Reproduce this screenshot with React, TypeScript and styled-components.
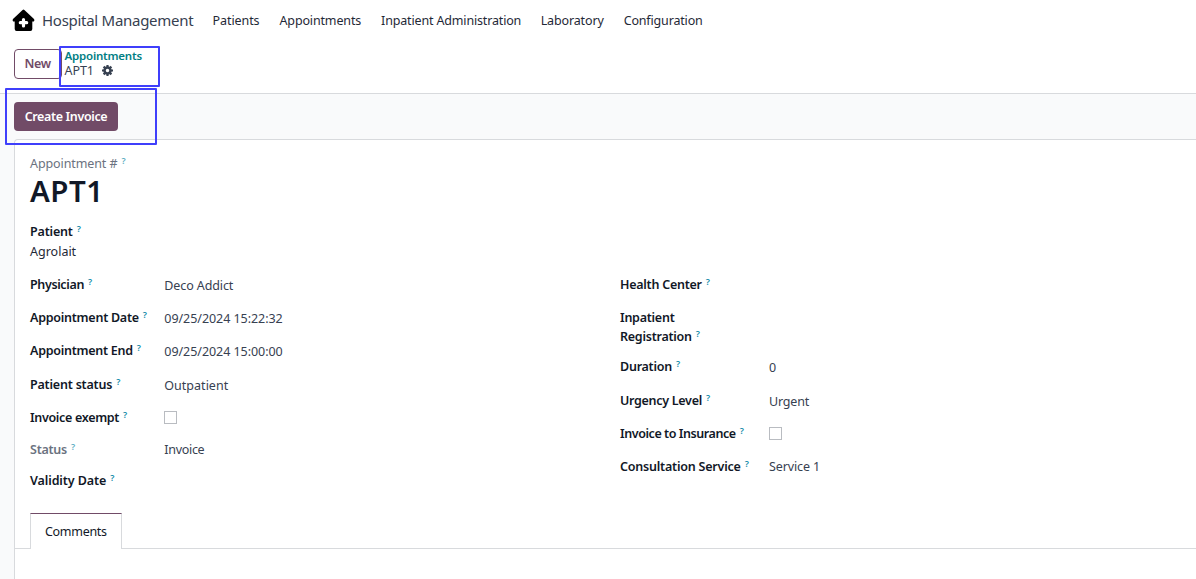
import React from "react";
import styled, { createGlobalStyle } from "styled-components";

const GlobalStyle = createGlobalStyle`
  * { box-sizing: border-box; }
  body {
    margin: 0;
    overflow: hidden;
    background: #fff;
    color: #374151;
    font: 400 12.5px/19px "Noto Sans", sans-serif;
  }
`;

const Page = styled.div`
  position: relative;
  display: flex;
  flex-direction: column;
  height: 579px;
  overflow: hidden;
`;

const Navbar = styled.nav`
  display: flex;
  align-items: center;
  height: 41px;
  padding-left: 12px;
`;

const AppIcon = styled.svg`
  width: 23px;
  height: 23px;
  margin-right: 7px;
`;

const Brand = styled.span`
  width: 170.5px;
  color: #374151;
  font-size: 15px;
  letter-spacing: -0.28px;
`;

const NavItem = styled.a<{ $gap: number; $track: number }>`
  margin-right: ${(p) => p.$gap}px;
  color: #1f2937;
  letter-spacing: ${(p) => p.$track}px;
  white-space: nowrap;
`;

const ControlPanel = styled.header`
  display: flex;
  align-items: flex-start;
  height: 52px;
  padding: 8px 0 0 14px;
`;

const NewButton = styled.button`
  width: 48px;
  height: 30px;
  padding: 0 0 1px 9.5px;
  border: 1px solid #714b67;
  border-radius: 4px;
  background: #fff;
  color: #714b67;
  font: 600 12.5px/19px "Noto Sans", sans-serif;
  letter-spacing: -0.4px;
  text-align: left;
`;

const Breadcrumb = styled.div`
  display: flex;
  flex-direction: column;
  margin: -1px 0 0 2.6px;
  line-height: 15px;
`;

const ParentLink = styled.a`
  color: #017e84;
  font-size: 11.5px;
  font-weight: 600;
  letter-spacing: -0.22px;
`;

const Current = styled.span`
  display: flex;
  align-items: center;
  gap: 8px;
  letter-spacing: -0.1px;
`;

const Gear = styled.svg`
  width: 11px;
  height: 11px;
`;

const FormView = styled.main`
  flex: 1;
  display: flex;
  flex-direction: column;
  border-top: 1px solid #d8dadd;
  background: #f9fafb;
`;

const StatusBar = styled.div`
  height: 45px;
  padding: 8px 0 0 14px;
`;

const PrimaryButton = styled.button`
  width: 104px;
  height: 29px;
  padding: 0 0 1px;
  border: 0;
  border-radius: 4px;
  background: #714b67;
  color: #fff;
  font: 600 12.5px/19px "Noto Sans", sans-serif;
  letter-spacing: -0.36px;
`;

const Sheet = styled.section`
  flex: 1;
  margin: 0 -3px 0 14px;
  border: 1px solid #d8dadd;
  border-bottom: 0;
  border-radius: 4px 4px 0 0;
  background: #fff;
`;

const TitleBlock = styled.div`
  height: 82px;
  padding: 14px 0 0 15px;
`;

const TitleLabel = styled.div`
  color: #6b7280;
  letter-spacing: -0.1px;
`;

const Title = styled.h1`
  margin: -1px 0 0;
  color: #111827;
  font-size: 29.5px;
  font-weight: 600;
  letter-spacing: 0.5px;
  line-height: 38px;
`;

const PatientBlock = styled.div`
  height: 53px;
  padding-left: 15px;
  color: #1f2937;
`;

const PatientName = styled.div`
  margin-top: 1px;
`;

const Groups = styled.div`
  display: grid;
  grid-template-columns: 590px 1fr;
  height: 238px;
  padding-left: 15px;
`;

const Group = styled.div`
  display: flex;
  flex-direction: column;
`;

const Row = styled.div<{ $height: number; $label: number }>`
  display: grid;
  grid-template-columns: ${(p) => p.$label}px 1fr;
  align-items: start;
  height: ${(p) => p.$height}px;
`;

const Label = styled.label<{ $track?: number; $muted?: boolean }>`
  color: ${(p) => (p.$muted ? "#6b7280" : "#111827")};
  font-weight: 600;
  letter-spacing: ${(p) => (p.$track ?? -0.1) - 0.15}px;
  white-space: pre-line;
`;

const Help = styled.sup<{ $muted?: boolean }>`
  margin-left: 4px;
  color: #0f8aa8;
  font-size: 9px;
  font-weight: 600;
  letter-spacing: 0;
  line-height: 0;
  vertical-align: 4px;
  opacity: ${(p) => (p.$muted ? 0.7 : 1)};
`;

const Value = styled.span<{ $drop: number; $track: number }>`
  margin-top: ${(p) => p.$drop}px;
  letter-spacing: ${(p) => p.$track}px;
`;

const Checkbox = styled.span`
  width: 13px;
  height: 13px;
  margin-top: 3px;
  border: 1px solid #b9bcc1;
  background: #fff;
`;

const Tabs = styled.div`
  display: flex;
  height: 36px;
`;

const TabSpacer = styled.div<{ $width?: number }>`
  ${(p) => (p.$width ? `width: ${p.$width}px;` : "flex: 1;")}
  border-bottom: 1px solid #d8dadd;
`;

const Tab = styled.div`
  width: 92px;
  padding: 8px 0 0 14px;
  border: 1px solid #d8dadd;
  border-top-color: #714b67;
  border-bottom: 0;
  color: #111827;
  letter-spacing: -0.3px;
`;

const Highlight = styled.div<{ $x: number; $y: number; $w: number; $h: number }>`
  position: absolute;
  left: ${(p) => p.$x}px;
  top: ${(p) => p.$y}px;
  width: ${(p) => p.$w}px;
  height: ${(p) => p.$h}px;
  border: 2px solid #3f3ffb;
  border-radius: 1px;
`;

type Field = {
  label: string;
  height: number;
  track?: number;
  muted?: boolean;
  value?: string;
  valueTrack?: number;
  drop?: number;
  checkbox?: boolean;
};

const leftFields: Field[] = [
  { label: "Physician", height: 33, track: -0.22, value: "Deco Addict", drop: 1 },
  { label: "Appointment Date", height: 33, value: "09/25/2024 15:22:32", valueTrack: -0.05, drop: 1 },
  { label: "Appointment End", height: 34, track: -0.12, value: "09/25/2024 15:00:00", valueTrack: -0.05, drop: 1 },
  { label: "Patient status", height: 33, track: -0.05, value: "Outpatient", valueTrack: 0.02, drop: 1 },
  { label: "Invoice exempt", height: 32, track: -0.17, checkbox: true },
  { label: "Status", height: 31, muted: true, value: "Invoice", valueTrack: -0.3 },
  { label: "Validity Date", height: 33, track: 0.05 },
];

const rightFields: Field[] = [
  { label: "Health Center", height: 33 },
  { label: "Inpatient\nRegistration", height: 49 },
  { label: "Duration", height: 34, value: "0", drop: 1 },
  { label: "Urgency Level", height: 33, track: -0.14, value: "Urgent", valueTrack: -0.19, drop: 1 },
  { label: "Invoice to Insurance", height: 33, track: -0.28, checkbox: true },
  { label: "Consultation Service", height: 33, track: -0.06, value: "Service 1", valueTrack: -0.12 },
];

function FieldGroup({ fields, labelWidth }: { fields: Field[]; labelWidth: number }) {
  return (
    <Group>
      {fields.map((f) => (
        <Row key={f.label} $height={f.height} $label={labelWidth}>
          <Label $track={f.track} $muted={f.muted}>
            {f.label}
            <Help $muted={f.muted}>?</Help>
          </Label>
          {f.checkbox && <Checkbox />}
          {f.value && (
            <Value $drop={f.drop ?? 0} $track={f.valueTrack ?? -0.1}>
              {f.value}
            </Value>
          )}
        </Row>
      ))}
    </Group>
  );
}

export default function App() {
  return (
    <Page>
      <GlobalStyle />
      <Navbar>
        <AppIcon viewBox="0 0 23 23">
          <path
            d="M10.6 .9Q11.5 .1 12.4 .9L22 10Q23 11.2 21.8 12.4H20.3V20Q20.3 21.9 18.4 21.9H4.6Q2.7 21.9 2.7 20V12.4H1.2Q0 11.2 1 10Z"
            fill="#000"
          />
          <path d="M11.5 10.5V16.9M8.3 13.7H14.7" stroke="#fff" strokeWidth="3.2" strokeLinecap="round" />
        </AppIcon>
        <Brand>Hospital Management</Brand>
        <NavItem $gap={20} $track={-0.07}>Patients</NavItem>
        <NavItem $gap={20} $track={-0.15}>Appointments</NavItem>
        <NavItem $gap={19.5} $track={-0.16}>Inpatient Administration</NavItem>
        <NavItem $gap={20} $track={-0.14}>Laboratory</NavItem>
        <NavItem $gap={0} $track={-0.16}>Configuration</NavItem>
      </Navbar>
      <ControlPanel>
        <NewButton>New</NewButton>
        <Breadcrumb>
          <ParentLink>Appointments</ParentLink>
          <Current>
            APT1
            <Gear viewBox="0 0 22 22">
              <circle cx="11" cy="11" r="6" fill="none" stroke="#374151" strokeWidth="5" />
              <path
                d="M11 0V4M11 18V22M0 11H4M18 11H22M3.2 3.2 6 6M16 16 18.8 18.8M3.2 18.8 6 16M16 6 18.8 3.2"
                stroke="#374151"
                strokeWidth="4.4"
              />
            </Gear>
          </Current>
        </Breadcrumb>
      </ControlPanel>
      <FormView>
        <StatusBar>
          <PrimaryButton>Create Invoice</PrimaryButton>
        </StatusBar>
        <Sheet>
          <TitleBlock>
            <TitleLabel>
              Appointment #<Help $muted>?</Help>
            </TitleLabel>
            <Title>APT1</Title>
          </TitleBlock>
          <PatientBlock>
            <Label $track={-0.03}>
              Patient<Help>?</Help>
            </Label>
            <PatientName>Agrolait</PatientName>
          </PatientBlock>
          <Groups>
            <FieldGroup fields={leftFields} labelWidth={134.3} />
            <FieldGroup fields={rightFields} labelWidth={149} />
          </Groups>
          <Tabs>
            <TabSpacer $width={15} />
            <Tab>Comments</Tab>
            <TabSpacer />
          </Tabs>
        </Sheet>
      </FormView>
      <Highlight $x={59} $y={46} $w={101} $h={41} />
      <Highlight $x={5} $y={88} $w={152} $h={57} />
    </Page>
  );
}
